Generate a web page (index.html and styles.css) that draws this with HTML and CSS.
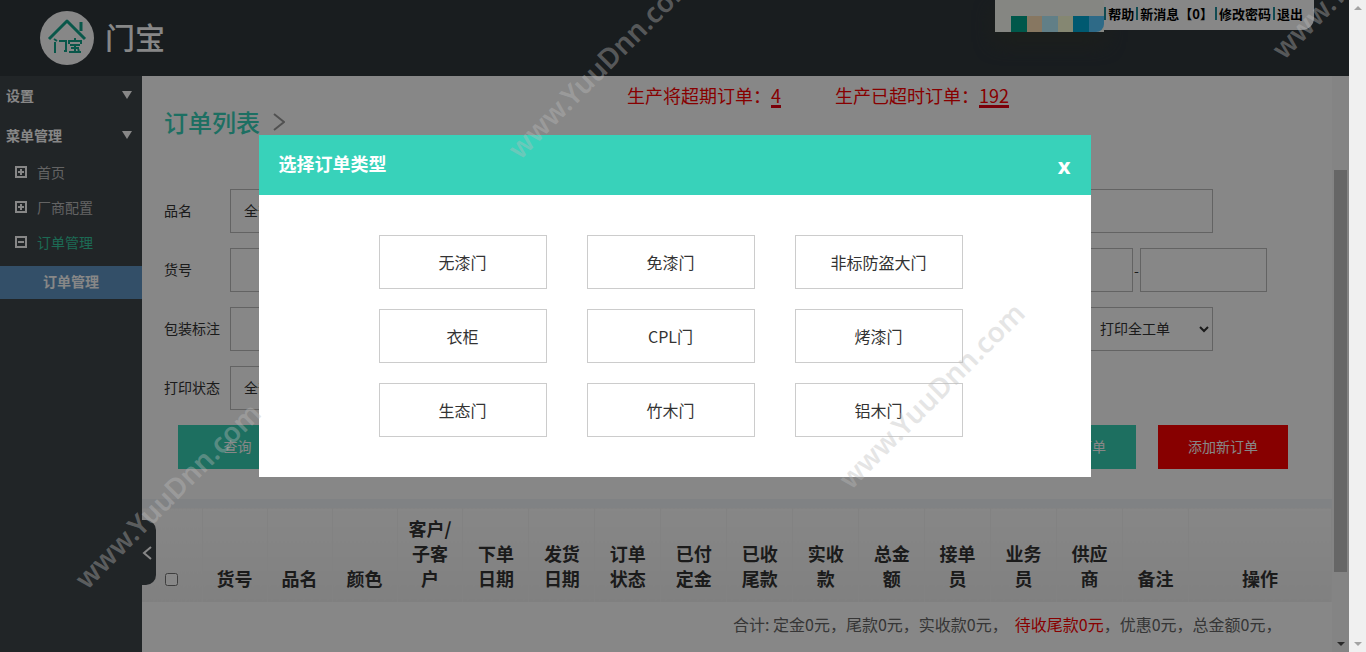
FILE: index.html
```html
<!DOCTYPE html>
<html lang="zh-CN">
<head>
<meta charset="utf-8">
<title>门宝 - 订单列表</title>
<link rel="stylesheet" href="styles.css">
</head>
<body>
<div class="window">
  <div class="app">
    <header class="header">
      <a class="brand" href="#">
        <svg class="brand-logo" viewBox="0 0 54 54" aria-hidden="true">
          <circle cx="27" cy="27" r="27" fill="#fff"/>
          <g fill="none" stroke="#12a58c" stroke-width="3">
            <path d="M9 28 L27 10 L45 28" stroke-linejoin="round"/>
            <path d="M41 11v9"/>
          </g>
          <g fill="none" stroke="#12a58c" stroke-width="2">
            <path d="M15 31v11M14 28l3 2M19 30h7v10h-2"/>
            <path d="M29 33v-3h12v3M35 27v3M30 34h10M31 37h8M29 41h12M35 34v7M38 38l1 2"/>
          </g>
        </svg>
        <span class="brand-name">门宝</span>
      </a>
      <div class="account">
        <div class="avatar" aria-hidden="true">
          <i class="swatch green"></i><i class="swatch peach"></i><i class="swatch sky"></i><i class="swatch cream"></i><i class="swatch teal"></i><i class="swatch blue"></i>
        </div>
        <nav class="account-links">
          <a href="#">帮助</a><a href="#">新消息【0】</a><a href="#">修改密码</a><a href="#">退出</a>
        </nav>
      </div>
    </header>
    <div class="body">
      <nav class="sidebar">
        <button class="group" type="button">设置<span class="caret"></span></button>
        <button class="group" type="button">菜单管理<span class="caret"></span></button>
        <ul class="menu">
          <li><a class="item" href="#"><svg class="box" viewBox="0 0 12 12"><path d="M1 1h10v10H1zM3 6h6M6 3v6"/></svg>首页</a></li>
          <li><a class="item" href="#"><svg class="box" viewBox="0 0 12 12"><path d="M1 1h10v10H1zM3 6h6M6 3v6"/></svg>厂商配置</a></li>
          <li><a class="item open" href="#"><svg class="box" viewBox="0 0 12 12"><path d="M1 1h10v10H1zM3 6h6"/></svg>订单管理</a></li>
        </ul>
        <a class="subitem" href="#">订单管理</a>
        <button class="collapse" type="button" aria-label="收起菜单"><svg viewBox="0 0 10 16"><path d="M9 2L2 8l7 6"/></svg></button>
      </nav>
      <main class="main">
        <div class="notices">
          <p>生产将超期订单：<a href="#">4</a></p>
          <p>生产已超时订单：<a href="#">192</a></p>
        </div>
        <h1 class="title">订单列表<svg viewBox="0 0 12 18" aria-hidden="true"><path d="M1 1l10 8-10 8"/></svg></h1>
        <form class="filters">
          <div class="row">
            <label for="name">品名</label>
            <select class="field" id="name"><option>全部</option></select>
            <div class="right"><input class="field wide" type="text" aria-label="客户"></div>
          </div>
          <div class="row">
            <label for="code">货号</label>
            <input class="field" id="code" type="text">
            <div class="right"><input class="field" type="text" aria-label="开始日期"><span class="dash">-</span><input class="field" type="text" aria-label="结束日期"></div>
          </div>
          <div class="row">
            <label for="pack">包装标注</label>
            <input class="field" id="pack" type="text">
            <div class="right"><select class="field last" aria-label="打印工单"><option>打印全工单</option></select></div>
          </div>
          <div class="row">
            <label for="print">打印状态</label>
            <select class="field" id="print"><option>全部</option></select>
          </div>
          <div class="actions">
            <button class="btn search" type="button">查询</button>
            <button class="btn export" type="button">导出订单</button>
            <button class="btn add" type="button">添加新订单</button>
          </div>
        </form>
        <table class="orders">
          <colgroup><col class="c-check"><col class="c-name" span="3"><col span="12"><col class="c-ops"></colgroup>
          <thead>
            <tr>
              <th><input type="checkbox" aria-label="全选"></th>
              <th>货号</th><th>品名</th><th>颜色</th><th>客户/子客户</th><th>下单日期</th><th>发货日期</th><th>订单状态</th><th>已付定金</th><th>已收尾款</th><th>实收款</th><th>总金额</th><th>接单员</th><th>业务员</th><th>供应商</th><th>备注</th><th>操作</th>
            </tr>
          </thead>
          <tbody>
            <tr><td colspan="17">合计: 定金0元，尾款0元，实收款0元，&nbsp; <em>待收尾款0元</em>，优惠0元，总金额0元，</td></tr>
          </tbody>
        </table>
      </main>
      <div class="scroll inner" aria-hidden="true"><span class="thumb"></span><span class="arrow down"></span></div>
    </div>
    <div class="overlay">
      <section class="modal" role="dialog" aria-labelledby="modal-title">
        <div class="modal-head">
          <h2 id="modal-title">选择订单类型</h2>
          <button class="close" type="button" aria-label="关闭">x</button>
        </div>
        <div class="types">
          <button type="button">无漆门</button>
          <button type="button">免漆门</button>
          <button type="button">非标防盗大门</button>
          <button type="button">衣柜</button>
          <button type="button">CPL门</button>
          <button type="button">烤漆门</button>
          <button type="button">生态门</button>
          <button type="button">竹木门</button>
          <button type="button">铝木门</button>
        </div>
      </section>
    </div>
  </div>
  <div class="scroll outer" aria-hidden="true"><span class="arrow up"></span><span class="arrow down"></span></div>
  <span class="mark m1">www.YuuDnn.com</span>
  <span class="mark m2">www.YuuDnn.com</span>
  <span class="mark m3">www.YuuDnn.com</span>
  <span class="mark m4">www.YuuDnn.com</span>
</div>
</body>
</html>
```

FILE: styles.css
```css
* { box-sizing: border-box; }
body, h1, h2, p, ul { margin: 0; padding: 0; }
body, button, input, select {
  font-family: "Noto Sans CJK SC", "Liberation Sans", sans-serif;
  font-size: 14px;
}
button { border: 0; border-radius: 0; cursor: pointer; }
a { color: inherit; text-decoration: none; }
svg { fill: none; stroke: currentColor; stroke-width: 2; flex: none; }

.window { position: relative; display: flex; height: 100vh; overflow: hidden; }
.app { position: relative; flex: 1; min-width: 0; display: flex; flex-direction: column; }

.header { display: flex; justify-content: space-between; align-items: flex-start; height: 76px; background: #30373c; }
.brand { display: flex; align-items: flex-start; gap: 11px; padding: 11px 0 0 40px; color: #fff; }
.brand-logo { width: 54px; height: 54px; stroke: none; }
.brand-name { font-size: 30px; font-weight: 500; line-height: 50px; }
.account { display: flex; align-items: flex-start; margin-right: 35px; }
.avatar { display: flex; align-items: flex-end; width: 109px; height: 32px; padding-left: 16px; background: #fcfdf6; box-shadow: 0 10px 20px #363c34; }
.swatch { flex: 1; height: 16px; }
.green { background: #00a48d; }
.peach { background: #ffe0b8; }
.sky { background: #b8f0ff; }
.cream { background: #fbffd8; }
.teal { background: #00a8d4; }
.blue { background: #58c8ff; border-bottom-right-radius: 8px; }
.account-links { display: flex; align-items: center; height: 30px; padding: 0 9px 4px 0; background: #fff; border-radius: 0 0 12px 0; font-size: 13px; font-weight: 700; color: #000; }
.account-links a { padding: 0 2px; border-left: 2px solid #1f8f9b; line-height: 13px; }

.body { flex: 1; min-height: 0; display: flex; }
.sidebar { position: relative; width: 142px; flex: none; background: #3f464b; color: #fff; }
.group { display: flex; justify-content: space-between; align-items: center; width: 100%; height: 40px; padding: 0 10px 2px 6px; background: none; color: #fff; font-weight: 700; }
.caret { border: 5px solid transparent; border-top: 8px solid #fff; border-bottom: 0; }
.menu { list-style: none; padding-bottom: 5px; }
.item { display: flex; align-items: center; gap: 10px; height: 35px; padding: 0 0 4px 15px; color: #bbb; }
.box { width: 12px; height: 12px; color: #fff; }
.item.open { color: #35c89f; }
.subitem { display: block; height: 33px; line-height: 31px; background: #6096c4; text-align: center; font-weight: 700; }
.collapse { position: absolute; left: 100%; bottom: 67px; width: 14px; height: 65px; padding: 0; background: #3f464b; border-radius: 0 10px 10px 0; color: #fff; }
.collapse svg { display: block; width: 10px; height: 16px; }

.main { flex: 1; min-width: 0; overflow: hidden; background: #fff; }
.notices { display: flex; gap: 54px; padding: 9px 0 0 485px; font-size: 18px; line-height: 20px; color: #f00; white-space: nowrap; }
.notices a { display: inline-block; border-bottom: 3px solid #e60012; }
.title { display: flex; align-items: center; gap: 13px; padding-left: 22px; font-size: 24px; font-weight: 500; line-height: 28px; color: #38d2ba; }
.title svg { width: 12px; height: 18px; color: #999; }
.filters { display: grid; gap: 15px; padding: 53px 65px 30px 22px; }
.row { display: flex; align-items: center; color: #333; }
.row label { width: 66px; flex: none; padding-bottom: 2px; }
.field { width: 127px; height: 44px; padding: 0 9px 2px; border: 1px solid #bbb; border-radius: 0; background: #fff; color: #333; }
.right { display: flex; align-items: center; width: 261px; margin-left: auto; }
.wide { width: 207px; }
.last { margin-left: 80px; }
.dash { width: 7px; text-align: center; }
.actions { display: flex; gap: 22px; padding-left: 14px; margin-right: -21px; }
.btn { height: 44px; padding: 0 30px 2px; background: #38d2b5; color: #fff; }
.search { width: 119px; }
.export { margin-left: auto; }
.add { background: #f00; }

.orders { width: 100%; table-layout: fixed; border-collapse: collapse; border-top: 9px solid #f2f5f9; }
.c-check { width: 60px; }
.c-name { width: 65px; }
.c-ops { width: 143px; }
.orders th { padding: 8px 8px 11px; border-right: 1px solid #f6f6f6; background: linear-gradient(#fff, #f2f2f2); font-size: 18px; line-height: 25px; font-weight: 700; color: #333; vertical-align: bottom; }
.orders th input { width: 13px; height: 13px; margin: 0; vertical-align: 0; }
.orders td { padding: 10px 50px 10px 0; font-size: 16px; line-height: 24px; color: #666; text-align: right; white-space: nowrap; }
.orders em { font-style: normal; color: #f00; }

.scroll { display: flex; flex-direction: column; align-items: center; width: 17px; flex: none; background: #f0f0f0; }
.outer { padding: 6px 0; }
.inner { padding: 94px 0 6px; background: #fafafa; }
.thumb { width: 13px; height: 402px; background: #c1c1c1; }
.arrow { border: 4px solid transparent; }
.up { border-bottom-color: #a3a3a3; border-top: 0; }
.down { margin-top: auto; border-top-color: #505050; border-bottom: 0; }
.outer .down { border-top-color: #a3a3a3; }

.overlay { position: absolute; inset: 0; display: flex; justify-content: center; align-items: flex-start; padding-top: 135px; background: rgba(0, 0, 0, .47); }
.modal { width: 832px; background: #fff; }
.modal-head { display: flex; justify-content: space-between; align-items: center; height: 60px; padding: 0 20px; background: #38d2ba; color: #fff; }
.modal-head h2 { padding-bottom: 4px; font-size: 18px; }
.close { padding: 0; background: none; color: #fff; font: 700 22px "Noto Sans", sans-serif; }
.types { display: grid; grid-template-columns: repeat(3, 1fr); gap: 20px 40px; padding: 40px 128px 40px 120px; }
.types button { height: 54px; background: #fff; border: 1px solid #ccc; font-size: 16px; color: #333; }

.mark { position: absolute; width: 280px; text-align: center; font: 600 28px/40px "Noto Sans", sans-serif; color: rgba(188, 188, 188, .38); transform: rotate(-45deg); white-space: nowrap; pointer-events: none; }
.m1 { left: 27px; top: 475px; }
.m2 { left: 460px; top: 45px; }
.m3 { left: 791px; top: 375px; }
.m4 { left: 1224px; top: -55px; }
```
